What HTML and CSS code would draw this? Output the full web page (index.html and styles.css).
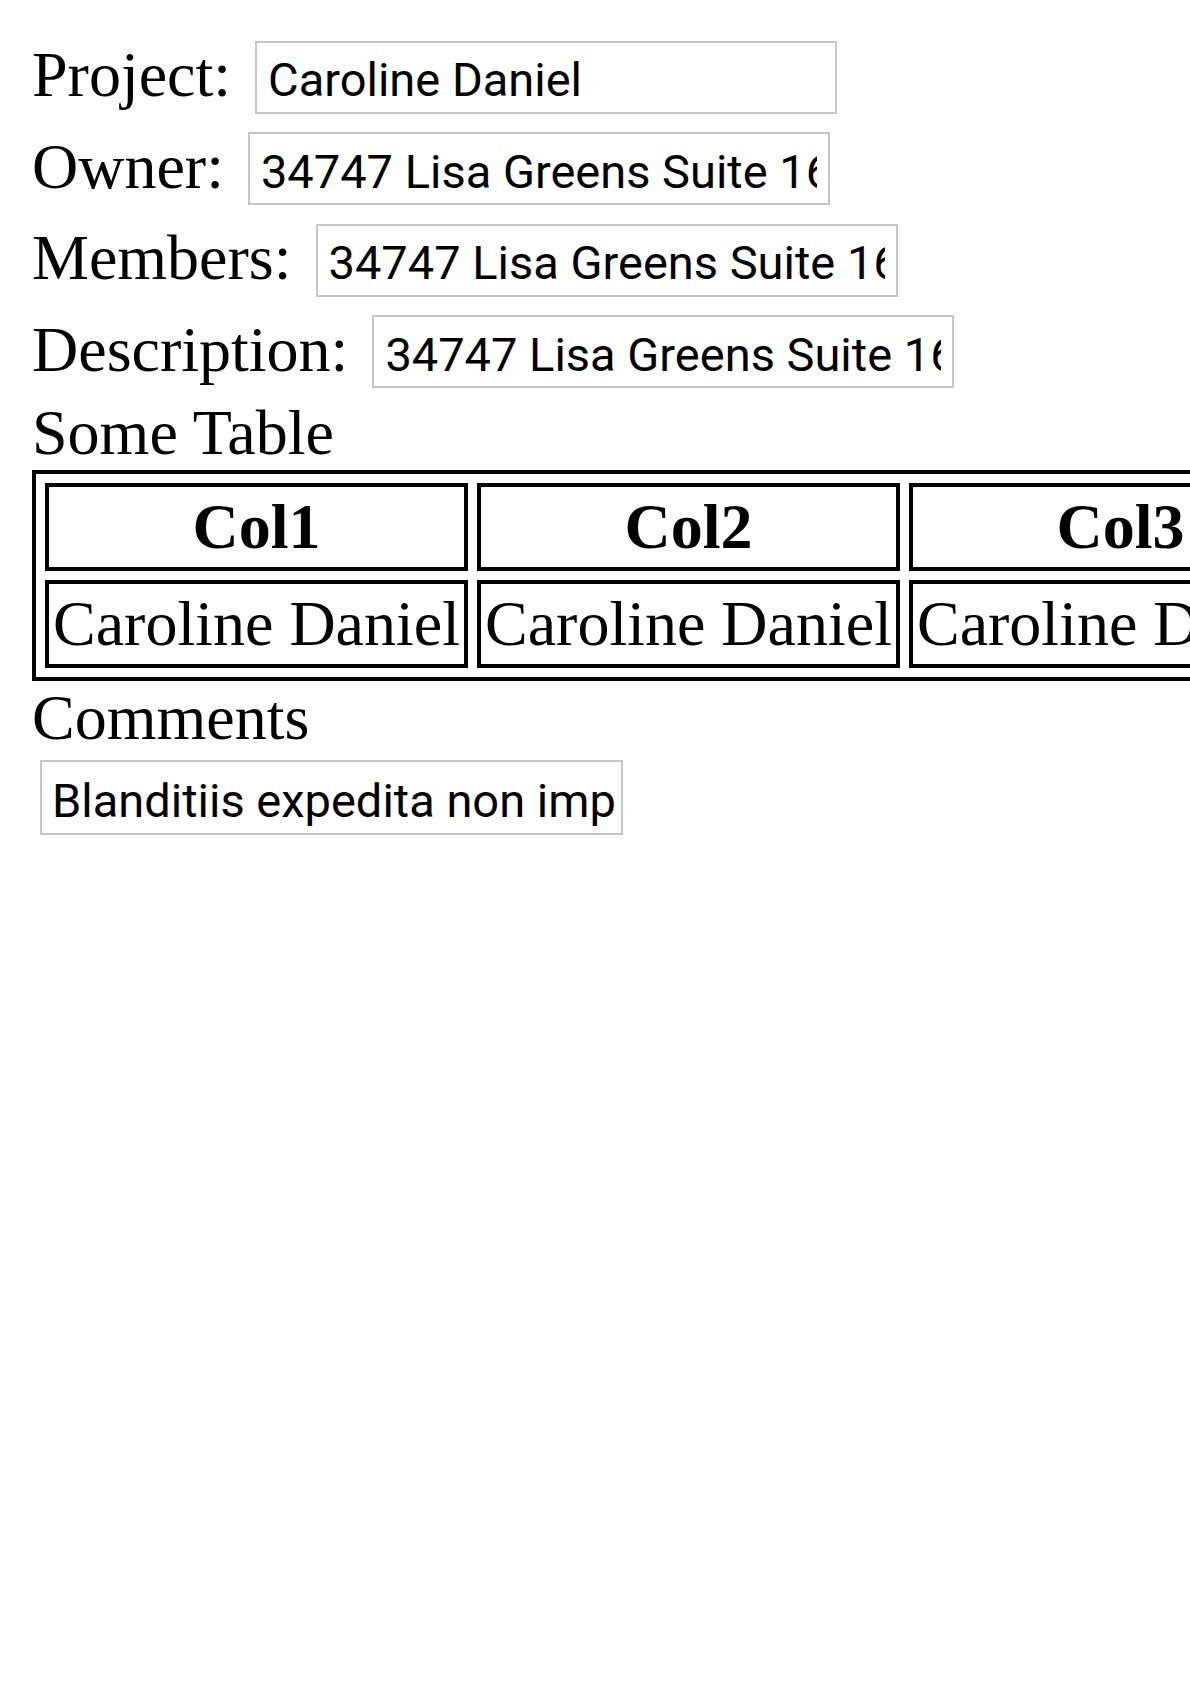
FILE: index.html
```html
<!DOCTYPE html>
<html>
<head>
<meta charset="utf-8">
<title>Project</title>
<link rel="stylesheet" href="styles.css">
</head>
<body>
<div class="page">
  <div class="fields">
    <div class="row"><label class="label">Project:</label><input class="field" type="text" value="Caroline Daniel"></div>
    <div class="row"><label class="label">Owner:</label><input class="field" type="text" value="34747 Lisa Greens Suite 166"></div>
    <div class="row"><label class="label">Members:</label><input class="field" type="text" value="34747 Lisa Greens Suite 166"></div>
    <div class="row"><label class="label">Description:</label><input class="field" type="text" value="34747 Lisa Greens Suite 166"></div>
  </div>
  <div class="heading">Some Table</div>
  <table class="grid">
    <thead>
      <tr><th>Col1</th><th>Col2</th><th>Col3</th></tr>
    </thead>
    <tbody>
      <tr><td>Caroline Daniel</td><td>Caroline Daniel</td><td>Caroline Daniel</td></tr>
    </tbody>
  </table>
  <div class="heading">Comments</div>
  <input class="field comment" type="text" value="Blanditiis expedita non imp">
</div>
</body>
</html>
```
FILE: styles.css
```css
html, body {
  margin: 0;
  padding: 0;
  background: #ffffff;
}

body {
  font-family: "Liberation Serif", "Times New Roman", serif;
  color: #000000;
  overflow: hidden;
}

.page {
  padding: 38px 0 0 32px;
}

.fields {
  display: flex;
  flex-direction: column;
  gap: 16px;
  margin-bottom: 8px;
}

.row {
  display: flex;
  align-items: baseline;
  gap: 24px;
}

.label {
  font-size: 64px;
  line-height: normal;
  white-space: nowrap;
}

.field {
  box-sizing: border-box;
  width: 582px;
  height: 73px;
  margin: 0;
  padding: 5px 11px 0 11px;
  border: 2px solid #c6c6c6;
  border-radius: 0;
  background: #ffffff;
  font-family: Roboto, "Liberation Sans", Arial, sans-serif;
  font-size: 47px;
  color: #000000;
  outline: none;
}

.heading {
  font-size: 64px;
  line-height: normal;
  white-space: nowrap;
}

.grid {
  border: 4px solid #000000;
  border-spacing: 9px;
  font-size: 64px;
  white-space: nowrap;
}

.grid th,
.grid td {
  border: 4px solid #000000;
  padding: 3px 4px;
  line-height: normal;
}

.grid th {
  font-weight: bold;
  text-align: center;
}

.grid td {
  font-weight: normal;
  text-align: left;
}

.comment {
  display: block;
  margin: 5px 0 0 8px;
  width: 583px;
  height: 75px;
  padding-left: 10px;
  padding-right: 6px;
}
```
